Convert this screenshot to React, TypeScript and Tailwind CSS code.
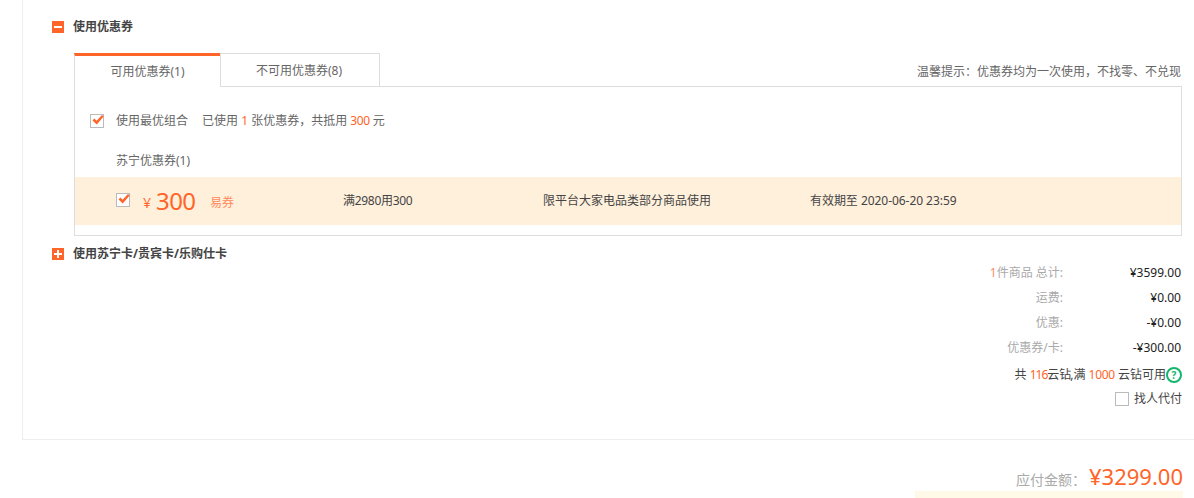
import React from 'react';

const font = { fontFamily: '"Noto Sans", "Noto Sans CJK SC", sans-serif' };

function CheckBox({ checked }: { checked?: boolean }) {
  return (
    <span className="w-[14px] h-[14px] border border-[#bbbbbb] bg-white relative shrink-0 block">
      {checked && (
        <svg className="absolute left-[1px] top-[-1px]" width="12" height="12" viewBox="0 0 12 12">
          <path d="M0.5 6.4 L2.4 4.6 L4.6 6.8 L10 1 L11.6 2.4 L4.8 10.4 Z" fill="#ff6428" />
        </svg>
      )}
    </span>
  );
}

function ToggleIcon({ open }: { open: boolean }) {
  return (
    <span className="w-3 h-3 bg-[#ff6428] relative shrink-0 flex items-center justify-center">
      <span className="w-2 h-[2px] bg-white" />
      {!open && <span className="absolute w-[2px] h-2 bg-white" />}
    </span>
  );
}

const totals = [
  { label: '件商品 总计:', count: '1', value: '¥3599.00' },
  { label: '运费:', value: '¥0.00' },
  { label: '优惠:', value: '-¥0.00' },
  { label: '优惠券/卡:', value: '-¥300.00' },
];

export default function App() {
  return (
    <div className="w-[1194px] h-[498px] overflow-hidden bg-white text-[12px] text-[#666666]" style={font}>
      <div className="ml-[22px] h-[440px] border-l border-b border-[#eeeeee] pl-[29px] pr-3">
        <div className="h-[53px] pt-[19px]">
          <div className="flex items-center gap-[9px] h-[15px]">
            <ToggleIcon open />
            <span className="font-bold text-[#444444]">使用优惠券</span>
          </div>
        </div>

        <div className="ml-[22px]">
          <div className="flex items-end justify-between h-[34px]">
            <div className="flex h-[34px] relative z-10">
              <div className="w-[146px] h-[34px] border-t-[3px] border-t-[#ff6428] border-l border-l-[#dddddd] bg-white flex items-center justify-center pt-[1px]">
                可用优惠券(1)
              </div>
              <div className="w-[160px] h-[34px] border border-[#dddddd] flex items-center justify-center pt-[1px] pr-[2px]">
                不可用优惠券(8)
              </div>
            </div>
            <span className="pb-[6px] pr-px">温馨提示：优惠券均为一次使用，不找零、不兑现</span>
          </div>

          <div className="h-[150px] -mt-px border border-[#dddddd]">
            <div className="flex items-center h-[67px] pl-[15px]">
              <CheckBox checked />
              <span className="ml-3">使用最优组合</span>
              <span className="ml-[14px]">
                已使用 <span className="text-[#ff6428]">1</span> 张优惠券，共抵用{' '}
                <span className="text-[#ff6428] tracking-[-0.4px]">300</span> 元
              </span>
            </div>
            <div className="h-[23px] pl-[41px] pb-[10px] flex items-center">苏宁优惠券(1)</div>
            <div className="h-[48px] bg-[#fff0dc] flex items-center">
              <div className="ml-[41px] -mt-[2px]">
                <CheckBox checked />
              </div>
              <span className="ml-[13px] text-[14px] text-[#ff6428] pt-[3px]">¥</span>
              <span className="ml-[5px] w-[54px] text-[24px] leading-none text-[#ff6428] tracking-[-0.6px]">300</span>
              <span className="w-[133px] text-[#ff8a5c] pt-1">易券</span>
              <span className="w-[200px] text-[#444444] tracking-[-0.3px]">满2980用300</span>
              <span className="w-[267px] text-[#444444]">限平台大家电品类部分商品使用</span>
              <span className="text-[#444444] tracking-[-0.05px]">有效期至 2020-06-20 23:59</span>
            </div>
          </div>
        </div>

        <div className="flex items-center gap-[9px] h-[15px] mt-[10px]">
          <ToggleIcon open={false} />
          <span className="font-bold text-[#444444]">使用苏宁卡/贵宾卡/乐购仕卡</span>
        </div>

        <div className="flex flex-col items-end pr-px -mt-px">
          {totals.map((row) => (
            <div key={row.label} className="flex h-[25px] items-center">
              <span className="text-[#aaaaaa]">
                {row.count && <span className="text-[#ff8a5c]">{row.count}</span>}
                {row.label}
              </span>
              <span className="w-[118px] text-right text-[#222222]">{row.value}</span>
            </div>
          ))}
          <div className="flex items-center h-[20px] mt-[5px] -mr-px text-[#444444]">
            <span>
              共 <span className="text-[#ff6428] tracking-[-1px]">116</span>云钻<span className="-ml-px">,</span>满 <span className="text-[#ff6428] tracking-[-0.3px]">1000</span> 云钻可用
            </span>
            <span className="w-4 h-4 rounded-full border-2 border-[#12b76a] text-[#12b76a] text-[10px] font-bold leading-none flex items-center justify-center">?</span>
          </div>
          <div className="flex items-center h-[20px] mt-[4px] -mr-px gap-[5px]">
            <CheckBox />
            <span className="text-[#444444]">找人代付</span>
          </div>
        </div>
      </div>

      <div className="flex justify-end items-baseline pr-[11px] pt-[25px] h-[51px]">
        <span className="text-[14px] text-[#aaaaaa] mr-[3px]">应付金额：</span>
        <span className="text-[22px] leading-none text-[#ff6428]">¥3299.00</span>
      </div>
      <div className="ml-[915px] w-[268px] h-[10px] bg-[#fff9e8]" />
    </div>
  );
}
